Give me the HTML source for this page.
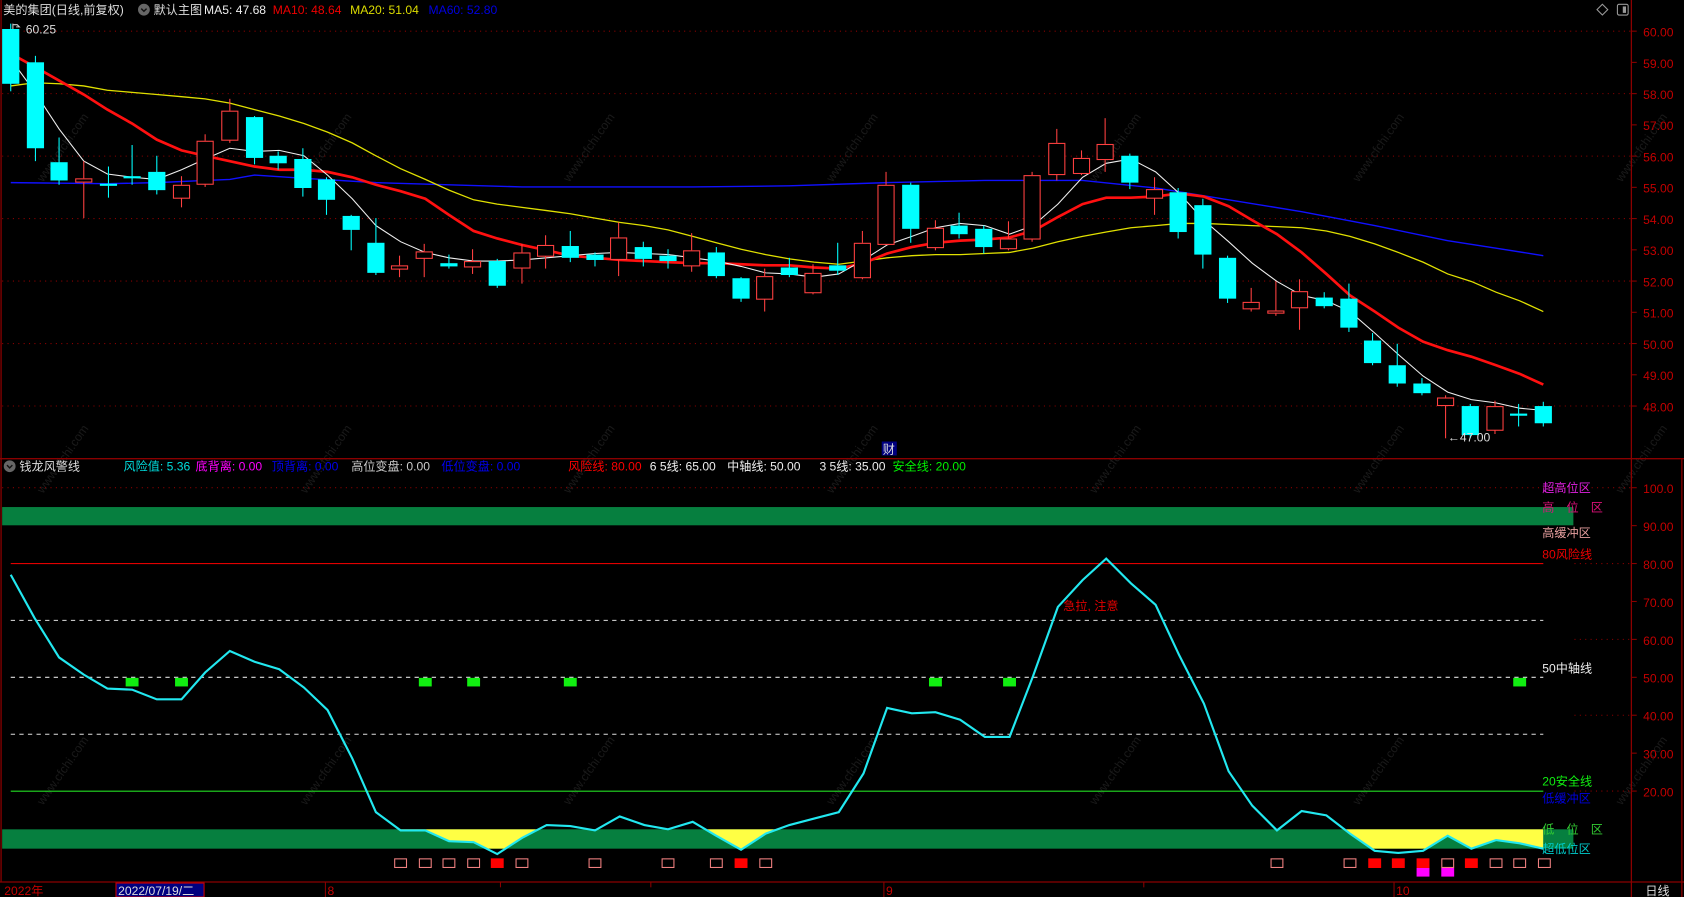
<!DOCTYPE html>
<html><head><meta charset="utf-8"><style>
html,body{margin:0;padding:0;background:#000;overflow:hidden}
svg{display:block}
text{font-family:"Liberation Sans","Noto Sans CJK SC",sans-serif;font-size:11.3px}
</style></head><body>
<svg id="s" width="1684" height="897" viewBox="0 0 1568 835" preserveAspectRatio="none" xmlns="http://www.w3.org/2000/svg">
<rect width="1568" height="835" fill="#000"/>
<g id="wm" fill="#1c1c1c" font-size="26"></g>
<g stroke="#8a0000" stroke-width="1.2" fill="none">
<line x1="1519" y1="0" x2="1519" y2="835"/>
<line x1="1566" y1="427" x2="1566" y2="835"/>
<line x1="0" y1="427" x2="1568" y2="427"/>
<line x1="0" y1="821" x2="1568" y2="821"/>
<line x1="1" y1="0" x2="1" y2="821"/>
</g>
<g id="grid" stroke="#8a0000" stroke-width="1" stroke-dasharray="1,4"></g>
<g id="axis" fill="#c40000"></g>
<text x="3" y="13" fill="#ddd">美的集团(日线,前复权)</text>
<circle cx="134" cy="9" r="5.5" fill="#666"/><path d="M131.5 8 l2.5 2.5 l2.5 -2.5" stroke="#111" stroke-width="1.3" fill="none"/>
<text x="143" y="13" fill="#ddd">默认主图</text>
<text x="190" y="13" fill="#eee">MA5: 47.68</text>
<text x="254" y="13" fill="#e00">MA10: 48.64</text>
<text x="326" y="13" fill="#dd0">MA20: 51.04</text>
<text x="399" y="13" fill="#0000e0">MA60: 52.80</text>
<path d="M1492 4 l5 5 l-5 5 l-5 -5z" stroke="#999" fill="none"/>
<rect x="1506" y="4" width="10" height="10" rx="1.5" stroke="#999" fill="none"/><rect x="1511" y="6" width="3" height="6" fill="#999"/>
<text x="24" y="31" fill="#ddd">60.25</text>
<path d="M12 22 v8 M12 23 h4 l2 2 h-3" stroke="#ccc" fill="none"/>
<g id="ma"></g>
<g id="candles"></g>
<text x="1348" y="411" fill="#ddd">←47.00</text>
<rect x="821" y="411" width="14" height="13" fill="#000080"/><text x="822" y="422" fill="#ddd" font-size="11">财</text>
<circle cx="9" cy="434" r="5.5" fill="#666"/><path d="M6.5 433 l2.5 2.5 l2.5 -2.5" stroke="#111" stroke-width="1.3" fill="none"/>
<text x="18" y="438" fill="#ddd">钱龙风警线</text>
<text x="115" y="438" fill="#0dd">风险值: 5.36</text>
<text x="182" y="438" fill="#f0f">底背离: 0.00</text>
<text x="253" y="438" fill="#00e">顶背离: 0.00</text>
<text x="327" y="438" fill="#ccc">高位变盘: 0.00</text>
<text x="411" y="438" fill="#00e">低位变盘: 0.00</text>
<text x="529" y="438" fill="#f00">风险线: 80.00</text>
<text x="605" y="438" fill="#eee">6 5线: 65.00</text>
<text x="677" y="438" fill="#eee">中轴线: 50.00</text>
<text x="763" y="438" fill="#eee">3 5线: 35.00</text>
<text x="831" y="438" fill="#0e0">安全线: 20.00</text>
<rect x="2" y="472" width="1463" height="17" fill="#067f3f"/>
<rect x="2" y="772" width="1463" height="18" fill="#067f3f"/>
<defs><clipPath id="cp"><polygon id="cpp"/></clipPath></defs>
<rect x="2" y="772" width="1463" height="18" fill="#ffff44" clip-path="url(#cp)"/>
<line x1="10" y1="524.6" x2="1437" y2="524.6" stroke="#e00000"/>
<g stroke="#ddd" stroke-dasharray="4,4"><line x1="10" y1="577.5" x2="1437" y2="577.5"/><line x1="10" y1="630.5" x2="1437" y2="630.5"/><line x1="10" y1="683.5" x2="1437" y2="683.5"/></g>
<line x1="10" y1="736.5" x2="1437" y2="736.5" stroke="#22dd22"/>
<g id="ind"></g>
<text x="990" y="568" fill="#e00000">急拉, 注意</text>
<text x="1436" y="458" fill="#e020e0">超高位区</text>
<text x="1436" y="476" fill="#e0107a">高　位　区</text>
<text x="1436" y="500" fill="#e8a0a0">高缓冲区</text>
<text x="1436" y="520" fill="#e00">80风险线</text>
<text x="1436" y="626" fill="#eee">50中轴线</text>
<text x="1436" y="731" fill="#1e1">20安全线</text>
<text x="1436" y="747" fill="#0000e0">低缓冲区</text>
<text x="1436" y="776" fill="#3c3">低　位　区</text>
<text x="1436" y="794" fill="#0cc">超低位区</text>
<text x="4" y="833" fill="#c40000">2022年</text>
<rect x="108" y="822" width="82" height="13" fill="#000080" stroke="#c00"/>
<text x="110" y="833" fill="#ddd">2022/07/19/二</text>
<line x1="303" y1="821" x2="303" y2="835" stroke="#8a0000"/><text x="305" y="833" fill="#c40000">8</text>
<line x1="823" y1="821" x2="823" y2="835" stroke="#8a0000"/><text x="825" y="833" fill="#c40000">9</text>
<line x1="1298" y1="821" x2="1298" y2="835" stroke="#8a0000"/><text x="1300" y="833" fill="#c40000">10</text>
<line x1="466" y1="821" x2="466" y2="826" stroke="#8a0000"/><line x1="606" y1="821" x2="606" y2="826" stroke="#8a0000"/><line x1="1065" y1="821" x2="1065" y2="826" stroke="#8a0000"/>
<text x="1532" y="833" fill="#ddd">日线</text>
</svg>
<script>
const NS="http://www.w3.org/2000/svg";
function el(p,t,a,txt){const e=document.createElementNS(NS,t);for(const k in a)e.setAttribute(k,a[k]);if(txt)e.textContent=txt;document.getElementById(p).appendChild(e);return e;}
for(let r=0;r<3;r++)for(let c=0;c<7;c++){const x=40+c*245,y=170+r*290;el("wm","text",{x:x,y:y,transform:`rotate(-55 ${x} ${y})`,"font-size":"26",fill:"#1a1a1a"},"www.cfchi.com");}
for(let p=48;p<=60;p++){const y=29+(60-p)*29.08;if(p%2==0)el("grid","line",{x1:2,y1:y,x2:1519,y2:y});el("axis","line",{x1:1519,y1:y,x2:1524,y2:y,stroke:"#8a0000"});el("axis","text",{x:1530,y:y+5,"font-size":"12.5"},p.toFixed(2));}
const iv=[100,90,80,70,60,50,40,30,20];
iv.forEach(v=>{const y=454+(100-v)*3.53;el("axis","line",{x1:1519,y1:y,x2:1524,y2:y,stroke:"#8a0000"});el("axis","text",{x:1530,y:y+5,"font-size":"12.5"},v==100?"100.0":v.toFixed(2));
 if(v==100)el("grid","line",{x1:2,y1:y,x2:1519,y2:y});else if(v%20==0)el("grid","line",{x1:1466,y1:y,x2:1519,y2:y});});
const ma5=[[10,55],[32,85],[55,120],[78,150],[100,162],[123,165],[146,167],[169,158],[191,148],[214,138],[237,141],[260,140],[283,145],[305,163],[328,185],[350,210],[373,225],[396,235],[418,240],[441,243],[463,243],[486,242],[509,240],[531,238],[554,236],[577,235],[600,236],[622,237],[645,240],[667,243],[690,248],[713,254],[735,255],[758,258],[781,255],[804,242],[826,228],[849,220],[871,212],[894,208],[917,210],[940,218],[962,210],[985,190],[1008,165],[1030,152],[1053,148],[1076,160],[1098,180],[1121,205],[1144,225],[1166,245],[1189,262],[1212,275],[1235,280],[1257,290],[1280,310],[1302,330],[1325,350],[1348,365],[1370,372],[1393,375],[1415,380],[1437,382]];
const ma10=[[10,50],[32,62],[55,75],[78,88],[100,102],[123,115],[146,130],[169,140],[191,145],[214,150],[237,155],[260,158],[283,158],[305,160],[328,165],[350,172],[373,178],[396,185],[418,200],[441,215],[463,222],[486,228],[509,233],[531,238],[554,240],[577,242],[600,243],[622,244],[645,245],[667,245],[690,246],[713,247],[735,247],[758,249],[781,250],[804,245],[826,236],[849,230],[871,226],[894,224],[917,223],[940,221],[962,215],[985,202],[1008,190],[1030,184],[1053,184],[1076,183],[1098,180],[1121,183],[1144,192],[1166,205],[1189,218],[1212,235],[1235,255],[1257,275],[1280,290],[1302,305],[1325,318],[1348,326],[1370,332],[1393,340],[1415,348],[1437,358]];
const ma20=[[10,80],[32,77],[55,78],[78,80],[100,84],[123,86],[146,88],[169,90],[191,92],[214,96],[237,102],[260,108],[283,115],[305,123],[328,133],[350,145],[373,157],[396,167],[418,177],[441,186],[463,190],[486,193],[509,196],[531,199],[554,203],[577,207],[600,210],[622,214],[645,220],[667,226],[690,232],[713,237],[735,241],[758,244],[781,246],[804,243],[826,240],[849,238],[871,237],[894,237],[917,236],[940,235],[962,231],[985,225],[1008,220],[1030,216],[1053,212],[1076,210],[1098,208],[1121,208],[1144,209],[1166,210],[1189,211],[1212,212],[1235,215],[1257,220],[1280,227],[1302,235],[1325,244],[1348,255],[1370,262],[1393,272],[1415,280],[1437,290]];
const ma60=[[10,170],[100,171],[146,170],[191,168],[214,167],[237,163],[283,166],[350,170],[418,172],[486,174],[554,174],[645,174],[735,173],[826,170],[917,168],[1008,168],[1076,175],[1144,186],[1212,197],[1280,210],[1348,224],[1393,231],[1437,238]];
const pl=a=>a.map(p=>p.join(",")).join(" ");
el("ma","polyline",{points:pl(ma60),stroke:"#1010ff","stroke-width":1.3,fill:"none"});
el("ma","polyline",{points:pl(ma20),stroke:"#e0e000","stroke-width":1.2,fill:"none"});
el("ma","polyline",{points:pl(ma10),stroke:"#ff1010","stroke-width":2.5,fill:"none"});
el("ma","polyline",{points:pl(ma5),stroke:"#eee","stroke-width":1,fill:"none"});
const C=[[27,78,22,85,0],[58,138,52,150,0],[151,168,128,172,0],[166,169,150,203,1],[171,173,155,184,0],[164,166,135,172,0],[160,177,145,181,0],[172,184,164,193,1],[131,171,125,174,1],[103,130,92,133,1],[109,147,108,153,0],[145,152,141,158,0],[148,175,138,183,0],[167,186,165,200,0],[201,214,200,233,0],[226,254,203,256,0],[247,250,238,258,1],[234,240,227,258,1],[245,248,237,250,0],[243,248,232,255,1],[243,266,241,268,0],[235,249,227,264,1],[228,238,219,250,1],[229,240,215,244,0],[237,242,235,248,0],[221,241,207,257,1],[230,241,225,248,0],[238,243,232,250,0],[233,247,217,253,1],[235,257,230,259,0],[259,278,258,281,0],[257,278,250,290,1],[249,256,240,258,0],[254,272,246,274,1],[247,252,226,256,0],[226,258,215,260,1],[172,227,160,228,1],[172,213,170,226,0],[212,230,205,233,1],[210,218,198,222,0],[213,230,210,236,0],[222,231,206,233,1],[163,222,160,225,1],[133,162,120,168,1],[147,161,140,163,1],[134,148,110,160,1],[145,170,143,176,0],[176,184,165,200,1],[179,216,175,222,0],[191,237,185,250,0],[240,278,238,282,0],[281,287,268,290,1],[289,291,262,294,1],[271,286,260,307,1],[277,285,272,287,0],[278,305,264,309,0],[317,338,310,340,0],[340,357,320,360,0],[357,366,352,368,0],[370,377,368,408,1],[378,405,376,408,0],[378,400,373,404,1],[385,387,376,397,0],[378,394,374,397,0]];
C.forEach((c,i)=>{const x=Math.round(10+i*22.65),w=16;const [t,b,h,l,u]=c;
 if(u){el("candles","line",{x1:x,y1:h,x2:x,y2:t,stroke:"#ff4040"});el("candles","line",{x1:x,y1:b,x2:x,y2:l,stroke:"#ff4040"});
  el("candles","rect",{x:x-w/2+.5,y:t+.5,width:w-1,height:Math.max(b-t,1),fill:"#000",stroke:"#ff4040"});}
 else{el("candles","line",{x1:x,y1:h,x2:x,y2:l,stroke:"#00ffff"});el("candles","rect",{x:x-w/2,y:t,width:w,height:Math.max(b-t,2),fill:"#00ffff"});}
});
const L=[[10,535],[32,575],[55,612],[78,628],[100,641],[123,642],[146,651],[169,651],[191,626],[214,606],[237,616],[260,623],[283,640],[305,661],[328,706],[350,756],[373,773],[396,773],[418,783],[441,784],[463,795],[486,780],[509,768],[531,769],[554,773],[577,760],[600,768],[622,772],[645,765],[667,778],[690,791],[713,776],[735,768],[758,762],[781,756],[804,720],[826,659],[849,664],[871,663],[894,670],[917,686],[940,686],[962,629],[985,565],[1008,540],[1030,520],[1053,543],[1076,563],[1098,610],[1121,655],[1144,718],[1166,750],[1189,773],[1212,755],[1235,759],[1257,776],[1280,792],[1302,794],[1325,792],[1348,778],[1370,790],[1393,782],[1415,785],[1437,790]];
document.getElementById("cpp").setAttribute("points",pl(L)+" 1437,0 10,0");
el("ind","polyline",{points:pl(L),stroke:"#22e8f0","stroke-width":2,fill:"none"});
[123,169,396,441,531,871,940,1415].forEach(x=>el("ind","rect",{x:x-6,y:631,width:12,height:8,fill:"#11ee11"}));
const hol=[373,396,418,441,486,554,622,667,713,1189,1257,1348,1393,1415,1438],red=[463,690,1280,1302,1325,1370],mag=[1325,1348];
hol.forEach(x=>el("ind","rect",{x:x-5.5,y:799.5,width:11,height:8,fill:"none",stroke:"#f08080"}));
red.forEach(x=>el("ind","rect",{x:x-6,y:799,width:12,height:9,fill:"#ff0000"}));
mag.forEach(x=>el("ind","rect",{x:x-6,y:808,width:12,height:8,fill:"#ff00ff"}));
</script>
</body></html>
